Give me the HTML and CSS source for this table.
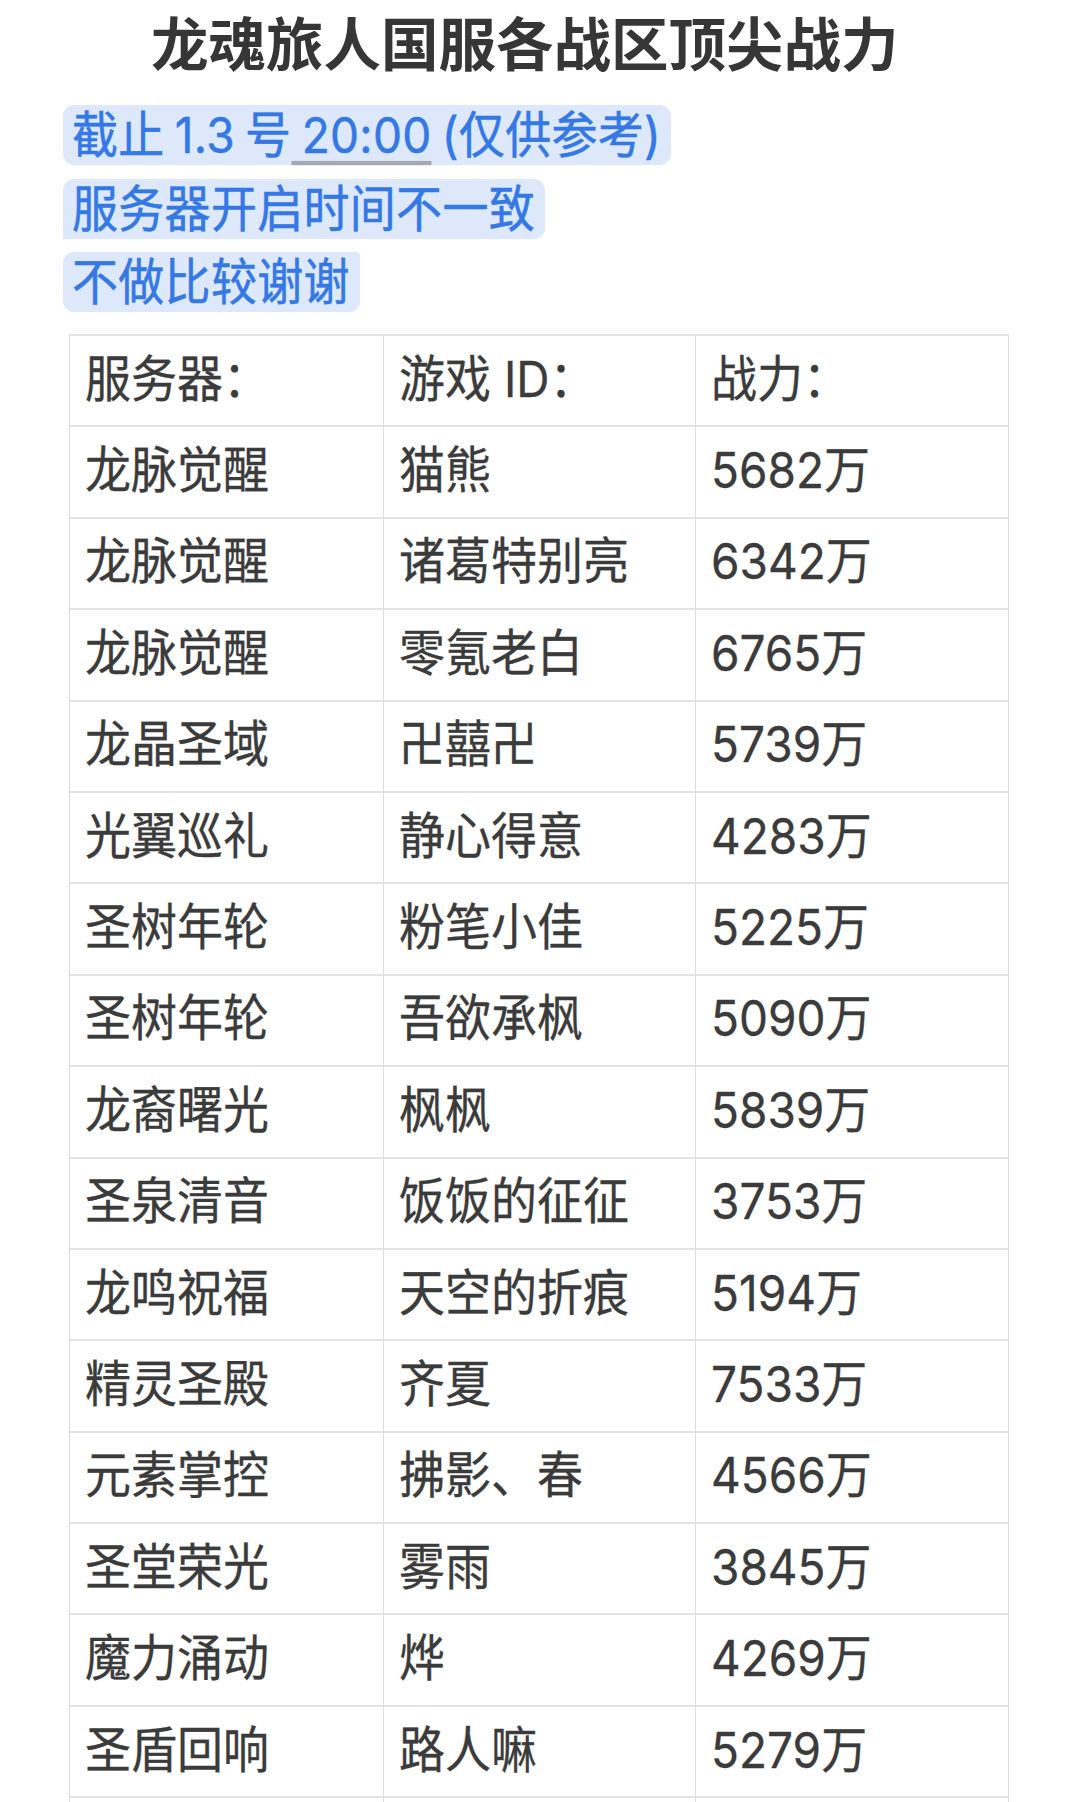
FILE: index.html
```html
<!DOCTYPE html>
<html lang="zh-CN">
<head>
<meta charset="utf-8">
<title>龙魂旅人国服各战区顶尖战力</title>
<link rel="stylesheet" href="styles.css">
</head>
<body>
<main class="page">
  <h1 class="title">龙魂旅人国服各战区顶尖战力</h1>
  <div class="notes">
    <p class="note note-first"><span class="tx">截止 1.3 号<span class="u"> 20:00</span> (仅供参考)</span></p>
    <p class="note note-mid"><span class="tx">服务器开启时间不一致</span></p>
    <p class="note note-last"><span class="tx">不做比较谢谢</span></p>
  </div>
  <table class="rank">
    <colgroup><col class="c1"><col class="c2"><col class="c3"></colgroup>
    <thead>
      <tr><th><span class="tx">服务器：</span></th><th><span class="tx">游戏 ID：</span></th><th><span class="tx">战力：</span></th></tr>
    </thead>
    <tbody>
      <tr><td><span class="tx">龙脉觉醒</span></td><td><span class="tx">猫熊</span></td><td><span class="tx">5682万</span></td></tr>
      <tr><td><span class="tx">龙脉觉醒</span></td><td><span class="tx">诸葛特别亮</span></td><td><span class="tx">6342万</span></td></tr>
      <tr><td><span class="tx">龙脉觉醒</span></td><td><span class="tx">零氪老白</span></td><td><span class="tx">6765万</span></td></tr>
      <tr><td><span class="tx">龙晶圣域</span></td><td><span class="tx">卍囍卍</span></td><td><span class="tx">5739万</span></td></tr>
      <tr><td><span class="tx">光翼巡礼</span></td><td><span class="tx">静心得意</span></td><td><span class="tx">4283万</span></td></tr>
      <tr><td><span class="tx">圣树年轮</span></td><td><span class="tx">粉笔小佳</span></td><td><span class="tx">5225万</span></td></tr>
      <tr><td><span class="tx">圣树年轮</span></td><td><span class="tx">吾欲承枫</span></td><td><span class="tx">5090万</span></td></tr>
      <tr><td><span class="tx">龙裔曙光</span></td><td><span class="tx">枫枫</span></td><td><span class="tx">5839万</span></td></tr>
      <tr><td><span class="tx">圣泉清音</span></td><td><span class="tx">饭饭的征征</span></td><td><span class="tx">3753万</span></td></tr>
      <tr><td><span class="tx">龙鸣祝福</span></td><td><span class="tx">天空的折痕</span></td><td><span class="tx">5194万</span></td></tr>
      <tr><td><span class="tx">精灵圣殿</span></td><td><span class="tx">齐夏</span></td><td><span class="tx">7533万</span></td></tr>
      <tr><td><span class="tx">元素掌控</span></td><td><span class="tx">拂影、春</span></td><td><span class="tx">4566万</span></td></tr>
      <tr><td><span class="tx">圣堂荣光</span></td><td><span class="tx">雾雨</span></td><td><span class="tx">3845万</span></td></tr>
      <tr><td><span class="tx">魔力涌动</span></td><td><span class="tx">烨</span></td><td><span class="tx">4269万</span></td></tr>
      <tr><td><span class="tx">圣盾回响</span></td><td><span class="tx">路人嘛</span></td><td><span class="tx">5279万</span></td></tr>
      <tr><td></td><td></td><td></td></tr>
    </tbody>
  </table>
</main>
</body>
</html>
```
FILE: styles.css
```css
html, body {
  margin: 0;
  padding: 0;
  background: #ffffff;
}
body {
  overflow: hidden;
  font-family: Inter, "Noto Sans CJK SC", sans-serif;
}
.page {
  width: 1080px;
  height: 1802px;
  overflow: hidden;
}
.title {
  margin: 0;
  padding-left: 151px;
  height: 82px;
  line-height: 82px;
  font-family: "Noto Sans CJK SC", sans-serif;
  font-size: 57.5px;
  font-weight: 700;
  color: #363636;
  white-space: nowrap;
}
.notes {
  display: flex;
  flex-direction: column;
  align-items: flex-start;
  gap: 13.5px;
  margin-top: 23px;
  margin-left: 63px;
}
.note {
  margin: 0;
  height: 60px;
  line-height: 60px;
  padding: 0 10px 0 9px;
  border-radius: 11px;
  background: #dde9fb;
  color: #3478e6;
  font-size: 46px;
  font-weight: 400;
  letter-spacing: 0.3px;
  word-spacing: -3px;
  -webkit-text-stroke: 0.5px #3478e6;
  white-space: nowrap;
}
.note-mid { border-bottom-left-radius: 0; }
.note-last { border-top-right-radius: 4px; }
.tx {
  display: inline-block;
  transform: scaleY(1.08);
}
.u {
  text-decoration: underline;
  text-decoration-color: #a5a8b0;
  text-decoration-thickness: 4px;
  text-underline-offset: 7px;
}
.rank {
  width: 939px;
  margin-top: 22px;
  margin-left: 69px;
  table-layout: fixed;
  border-collapse: separate;
  border-spacing: 0;
  border-top: 2px solid #e3e3e3;
  border-left: 1px solid #dcdcdc;
}
.c1 { width: 314px; }
.c2 { width: 312px; }
.c3 { width: 313px; }
.rank th,
.rank td {
  height: 77.4px;
  padding: 0 0 12px 15px;
  border-right: 1px solid #dcdcdc;
  border-bottom: 2px solid #e3e3e3;
  text-align: left;
  vertical-align: middle;
  font-size: 46px;
  font-weight: 400;
  color: #3b3b3b;
  -webkit-text-stroke: 0.3px #3b3b3b;
  white-space: nowrap;
}
```
